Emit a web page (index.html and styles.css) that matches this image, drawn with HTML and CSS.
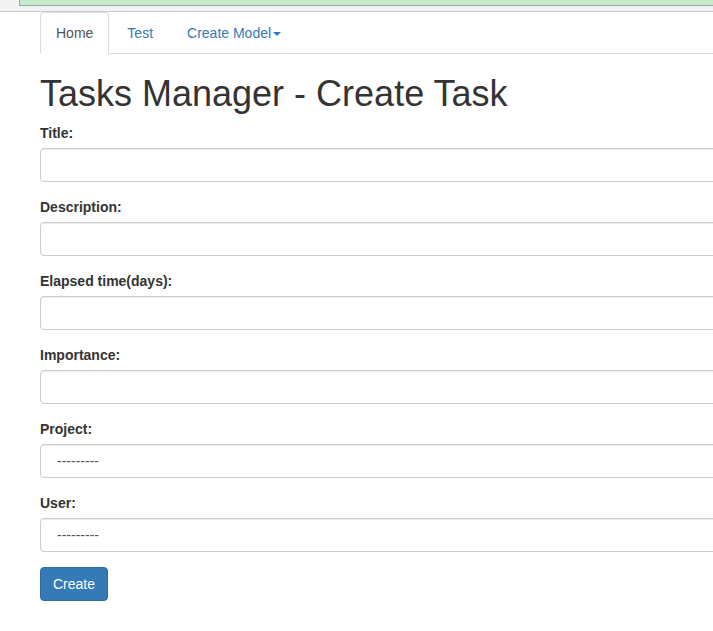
FILE: index.html
```html
<!DOCTYPE html>
<html>
<head>
<meta charset="utf-8">
<title>Tasks Manager - Create Task</title>
<link rel="stylesheet" href="styles.css">
</head>
<body>
<div class="topstrip">
  <div class="alert-bar"></div>
</div>
<div class="page">
  <ul class="tabs">
    <li class="tab active"><a href="#">Home</a></li>
    <li class="tab"><a href="#">Test</a></li>
    <li class="tab"><a href="#">Create Model<span class="caret"></span></a></li>
  </ul>
  <h1 class="title">Tasks Manager - Create Task</h1>
  <form class="form">
    <div class="group">
      <label class="label">Title:</label>
      <input class="control" type="text">
    </div>
    <div class="group">
      <label class="label">Description:</label>
      <input class="control" type="text">
    </div>
    <div class="group">
      <label class="label">Elapsed time(days):</label>
      <input class="control" type="text">
    </div>
    <div class="group">
      <label class="label">Importance:</label>
      <input class="control" type="text">
    </div>
    <div class="group">
      <label class="label">Project:</label>
      <select class="control select"><option>---------</option></select>
    </div>
    <div class="group">
      <label class="label">User:</label>
      <select class="control select"><option>---------</option></select>
    </div>
    <button class="btn" type="button">Create</button>
  </form>
</div>
</body>
</html>
```
FILE: styles.css
```css
html, body {
  margin: 0;
  padding: 0;
  overflow: hidden;
  background: #fff;
}
body {
  font-family: "Liberation Sans", Arial, sans-serif;
  font-size: 14px;
  line-height: 20px;
  color: #333;
}
.topstrip {
  height: 11px;
  background: #f2f2f2;
  border-bottom: 1px solid #c9c9c9;
  padding-left: 19px;
}
.alert-bar {
  height: 5px;
  background: #c8ebcd;
  border-left: 1px solid #9aa79c;
  border-bottom: 1px solid #9aa79c;
}
.page {
  padding-left: 40px;
  overflow: hidden;
}
.tabs {
  list-style: none;
  margin: 0;
  padding: 0;
  display: flex;
  border-bottom: 1px solid #ddd;
}
.tab {
  margin-right: 2px;
  margin-bottom: -1px;
}
.tab a {
  display: block;
  padding: 10px 15px;
  line-height: 20px;
  border: 1px solid transparent;
  border-radius: 4px 4px 0 0;
  color: #337ab7;
  text-decoration: none;
}
.tab.active a {
  color: #555;
  background: #fff;
  border-color: #ddd #ddd transparent;
}
.caret {
  display: inline-block;
  width: 0;
  height: 0;
  margin-left: 2px;
  vertical-align: middle;
  border-top: 4px solid #337ab7;
  border-left: 4px solid transparent;
  border-right: 4px solid transparent;
}
.title {
  font-size: 36px;
  font-weight: 500;
  line-height: 39px;
  margin: 20px 0 10px;
  color: #333;
}
.form {
  margin: 0 -20px 0 0;
}
.group {
  margin-bottom: 15px;
}
.label {
  display: block;
  font-weight: bold;
  margin-bottom: 5px;
}
.control {
  display: block;
  box-sizing: border-box;
  width: 100%;
  height: 34px;
  padding: 6px 12px;
  font-family: inherit;
  font-size: 14px;
  line-height: 20px;
  color: #555;
  background: #fff;
  border: 1px solid #ccc;
  border-radius: 4px;
  box-shadow: inset 0 1px 1px rgba(0,0,0,0.075);
  margin: 0;
}
.select {
  -webkit-appearance: none;
  appearance: none;
  padding-left: 16px;
}
.btn {
  display: inline-block;
  padding: 6px 12px;
  font-family: inherit;
  font-size: 14px;
  line-height: 20px;
  color: #fff;
  background: #337ab7;
  border: 1px solid #2e6da4;
  border-radius: 4px;
  cursor: pointer;
}
```
